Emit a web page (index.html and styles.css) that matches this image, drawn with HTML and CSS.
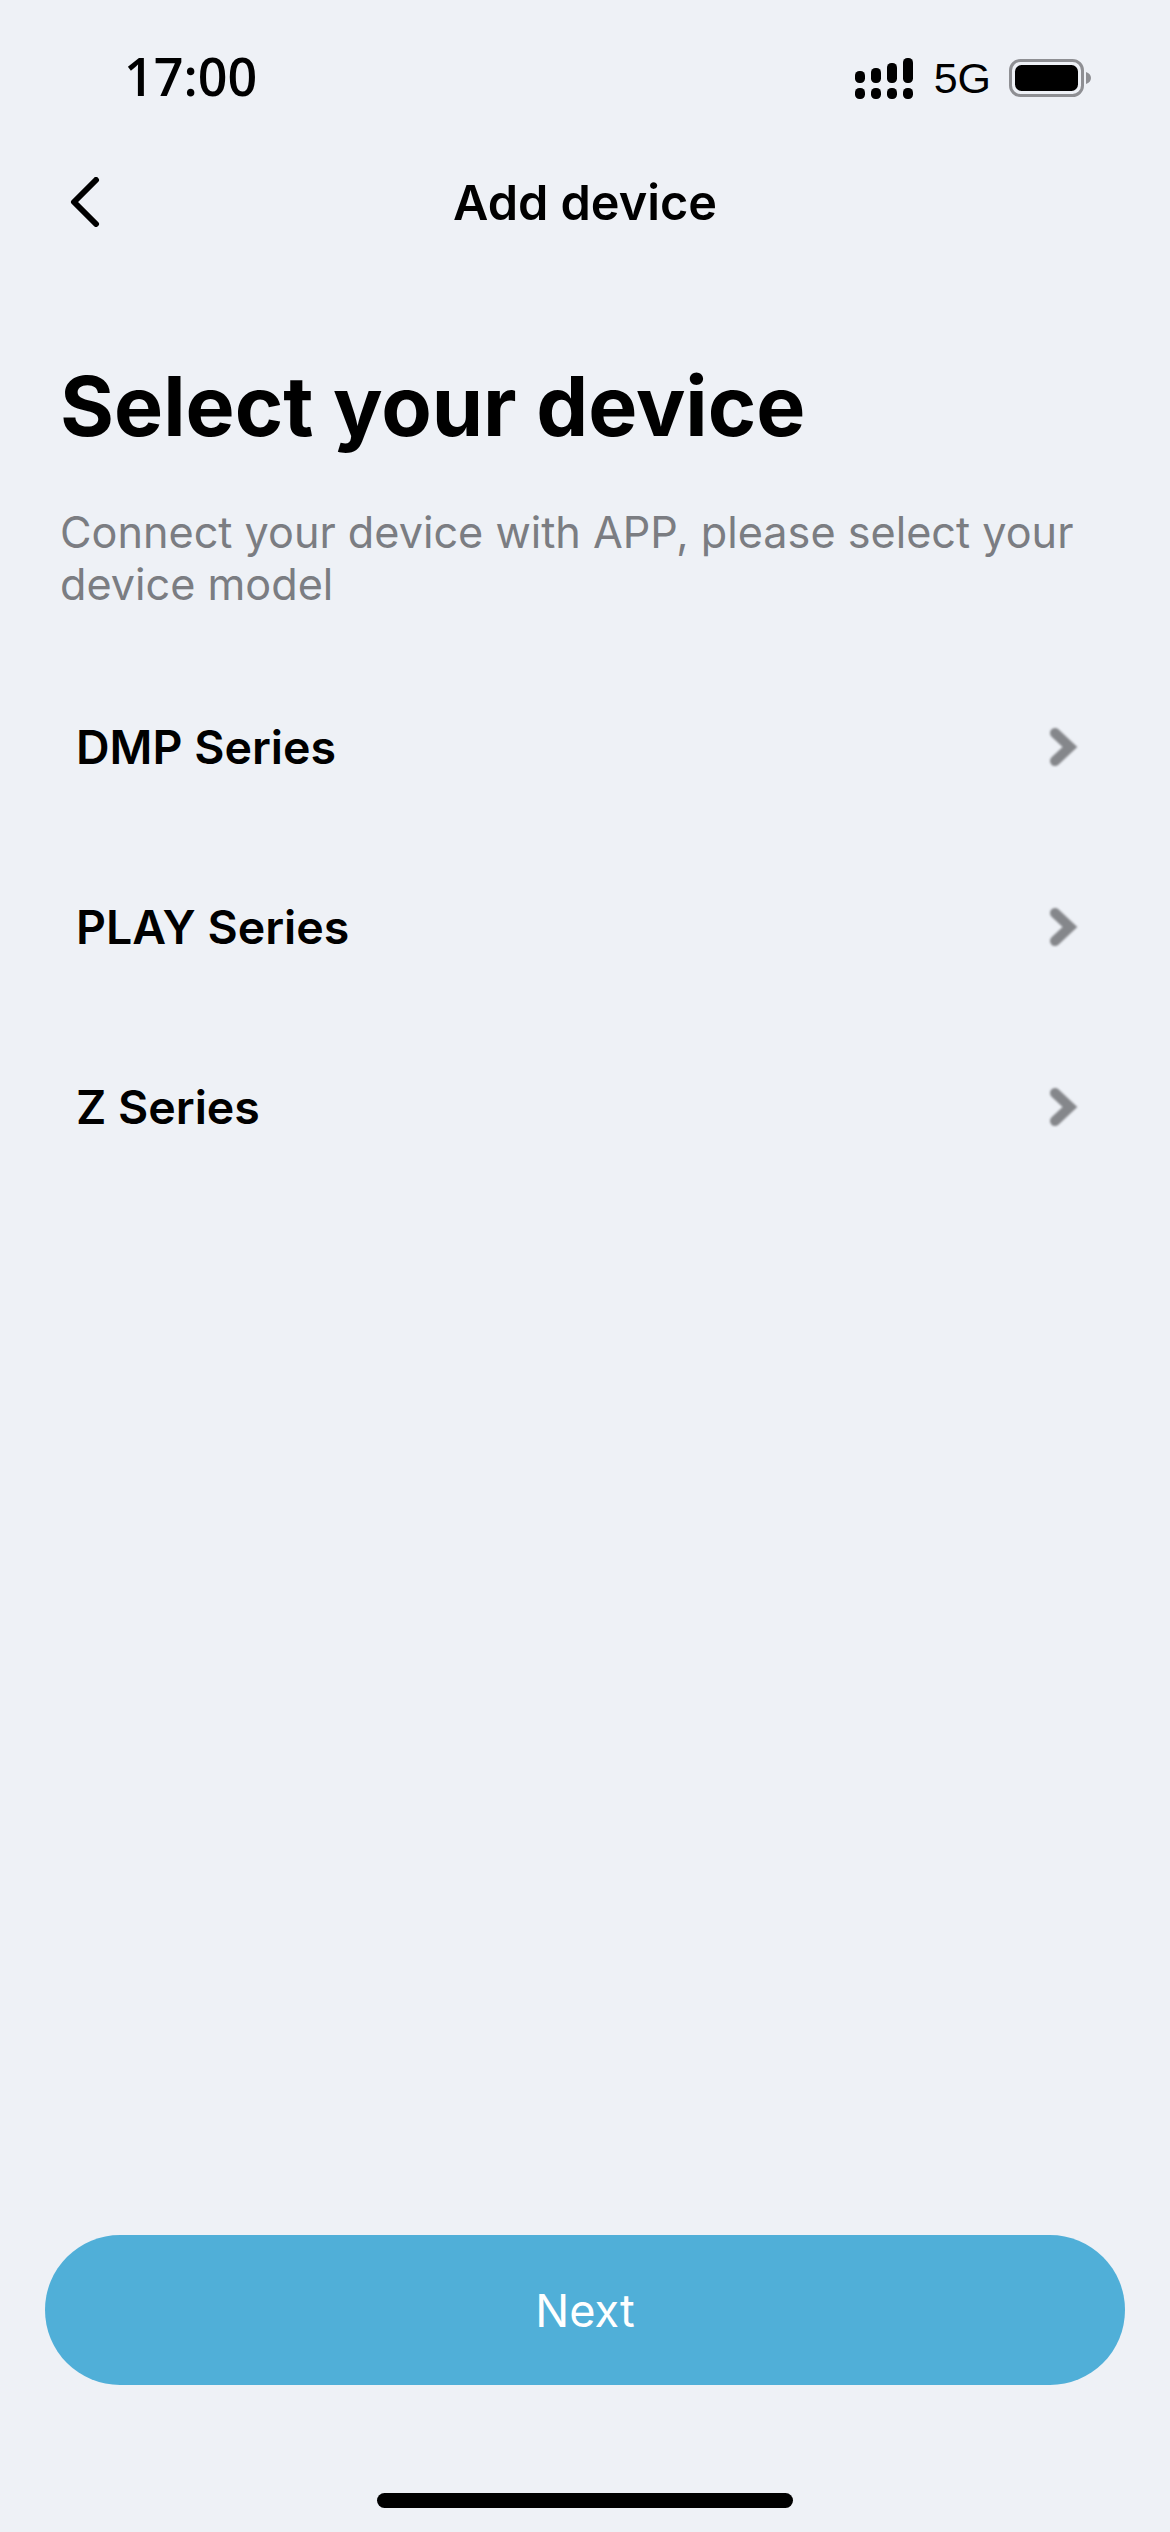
FILE: index.html
```html
<!DOCTYPE html>
<html lang="en">
<head>
<meta charset="utf-8">
<title>Add device</title>
<link rel="stylesheet" href="styles.css">
</head>
<body>
<div class="screen">
  <header class="status">
    <span class="time">17:00</span>
    <div class="status-right">
      <svg class="signal" width="58" height="41" viewBox="0 0 58 41" fill="#000">
        <rect x="0" y="13" width="10" height="12" rx="4.5"/><rect x="16" y="10" width="10" height="15" rx="4.5"/><rect x="32" y="5" width="10" height="20" rx="4.5"/><rect x="48" y="0" width="10" height="25" rx="4.5"/>
        <rect x="0" y="30" width="10" height="11" rx="4.5"/><rect x="16" y="30" width="10" height="11" rx="4.5"/><rect x="32" y="30" width="10" height="11" rx="4.5"/><rect x="48" y="30" width="10" height="11" rx="4.5"/>
      </svg>
      <span class="net">5G</span>
      <svg class="battery" width="82" height="38" viewBox="0 0 82 38">
        <rect x="1.5" y="1.5" width="72" height="35" rx="10" fill="none" stroke="#8e8f93" stroke-width="3"/>
        <rect x="6" y="6" width="63" height="26" rx="6.5" fill="#000"/>
        <path d="M77 13c3 1 5 3 5 6s-2 5-5 6z" fill="#8e8f93"/>
      </svg>
    </div>
  </header>
  <nav class="nav">
    <svg class="back" width="30" height="50" viewBox="0 0 30 50" fill="none" stroke="#000" stroke-width="6" stroke-linecap="round" stroke-linejoin="round"><path d="M26 3L4 25l22 22"/></svg>
    <span class="nav-title">Add device</span>
  </nav>
  <main class="content">
    <h1 class="heading">Select your device</h1>
    <p class="sub">Connect your device with APP, please select your device model</p>
    <ul class="list">
      <li class="row"><span>DMP Series</span><svg class="chev" width="30" height="38" viewBox="0 0 30 38" fill="none" stroke="#85878b" stroke-width="10" stroke-linejoin="miter" stroke-linecap="round"><path d="M6 5l15 14L6 33"/></svg></li>
      <li class="row"><span>PLAY Series</span><svg class="chev" width="30" height="38" viewBox="0 0 30 38" fill="none" stroke="#85878b" stroke-width="10" stroke-linejoin="miter" stroke-linecap="round"><path d="M6 5l15 14L6 33"/></svg></li>
      <li class="row"><span>Z Series</span><svg class="chev" width="30" height="38" viewBox="0 0 30 38" fill="none" stroke="#85878b" stroke-width="10" stroke-linejoin="miter" stroke-linecap="round"><path d="M6 5l15 14L6 33"/></svg></li>
    </ul>
  </main>
  <footer class="foot">
    <button class="next">Next</button>
    <div class="home"></div>
  </footer>
</div>
</body>
</html>
```
FILE: styles.css
```css
* { box-sizing: border-box; }
html, body { margin: 0; padding: 0; }
body { background: #eef1f6; font-family: Inter, "Liberation Sans", sans-serif; color: #000; }
.screen { width: 1170px; height: 2532px; display: flex; flex-direction: column; }
.status { height: 156px; padding: 0 79px 0 124px; display: flex; justify-content: space-between; align-items: center; }
.time { font-family: "Open Sans", sans-serif; font-size: 52px; font-weight: 600; line-height: 1; position: relative; top: -2px; }
.status-right { display: flex; align-items: center; gap: 21px; }
.battery { margin-left: -3px; }
.net { font-family: "Liberation Sans", sans-serif; font-size: 43px; line-height: 1; }
.nav { height: 92px; display: flex; align-items: center; justify-content: center; position: relative; }
.back { position: absolute; left: 70px; top: 21px; }
.nav-title { font-size: 48.6px; font-weight: 600; }
.content { flex: 1; padding: 0 60px; }
.heading { margin: 103px 0 0; font-size: 82.5px; line-height: 110px; font-weight: 700; }
.sub { margin: 45px 0 0; width: 1040px; font-size: 43.2px; line-height: 52px; color: #7b7d82; }
.list { list-style: none; margin: 47px 0 0; padding: 0; }
.row { height: 180px; padding: 0 31px 0 16px; display: flex; align-items: center; justify-content: space-between; font-size: 46.5px; font-weight: 600; }
.chev { filter: blur(0.8px); }
.foot { padding: 0 45px; display: flex; flex-direction: column; align-items: center; }
.next { width: 1080px; height: 150px; border: 0; border-radius: 75px; background: #50afd8; color: #fff; font: 400 45px Inter, sans-serif; }
.home { width: 416px; height: 15px; margin: 108px 0 24px; border-radius: 8px; background: #000; }
```
